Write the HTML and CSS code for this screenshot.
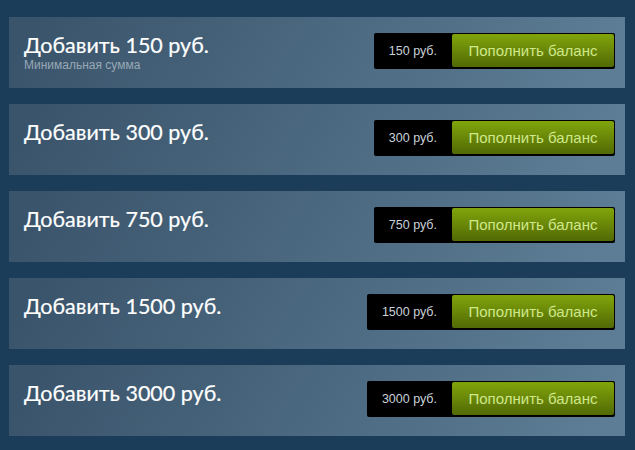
FILE: index.html
```html
<!DOCTYPE html>
<html lang="ru">
<head>
<meta charset="utf-8">
<title>Пополнение кошелька</title>
<link rel="stylesheet" href="styles.css">
</head>
<body>
<div class="funds">
  <div class="fund-row">
    <div class="fund-info">
      <h1 class="fund-title">Добавить 150 руб.</h1>
      <div class="fund-note">Минимальная сумма</div>
    </div>
    <div class="fund-action">
      <span class="fund-price">150 руб.</span>
      <a class="btn-green" href="#">Пополнить баланс</a>
    </div>
  </div>
  <div class="fund-row">
    <div class="fund-info">
      <h1 class="fund-title">Добавить 300 руб.</h1>
    </div>
    <div class="fund-action">
      <span class="fund-price">300 руб.</span>
      <a class="btn-green" href="#">Пополнить баланс</a>
    </div>
  </div>
  <div class="fund-row">
    <div class="fund-info">
      <h1 class="fund-title">Добавить 750 руб.</h1>
    </div>
    <div class="fund-action">
      <span class="fund-price">750 руб.</span>
      <a class="btn-green" href="#">Пополнить баланс</a>
    </div>
  </div>
  <div class="fund-row">
    <div class="fund-info">
      <h1 class="fund-title">Добавить 1500 руб.</h1>
    </div>
    <div class="fund-action">
      <span class="fund-price">1500 руб.</span>
      <a class="btn-green" href="#">Пополнить баланс</a>
    </div>
  </div>
  <div class="fund-row">
    <div class="fund-info">
      <h1 class="fund-title">Добавить 3000 руб.</h1>
    </div>
    <div class="fund-action">
      <span class="fund-price">3000 руб.</span>
      <a class="btn-green" href="#">Пополнить баланс</a>
    </div>
  </div>
</div>
</body>
</html>
```

FILE: styles.css
```css
html, body {
  margin: 0;
  padding: 0;
}

body {
  background: #1b3d5a;
  font-family: "Liberation Sans", Arial, sans-serif;
  width: 635px;
  height: 450px;
  overflow: hidden;
}

.funds {
  display: flex;
  flex-direction: column;
  gap: 16px;
  padding: 17px 10px 0 9px;
}

.fund-row {
  height: 71px;
  box-sizing: border-box;
  display: flex;
  justify-content: space-between;
  align-items: flex-start;
  padding: 15px 10px 0 15px;
  background: linear-gradient(-60deg, #5c7d95 5%, #3a546b 95%);
}

.fund-title {
  margin: 0;
  font-family: Lato, "Open Sans", sans-serif;
  font-weight: 400;
  font-size: 21.5px;
  line-height: 26px;
  color: #ffffff;
  -webkit-text-stroke: 0.2px #ffffff;
}

.fund-note {
  font-size: 12px;
  line-height: 14px;
  color: #98a8b5;
}

.fund-action {
  margin-top: 1px;
  display: flex;
  align-items: center;
  background: #000000;
  border-radius: 2px;
  padding: 1px 1px 2px 0;
  height: 36px;
  box-sizing: border-box;
}

.fund-price {
  padding: 0 15px 0 15px;
  font-size: 12.5px;
  color: #c9d2d9;
}

.btn-green {
  display: block;
  width: 162px;
  height: 33px;
  box-sizing: border-box;
  line-height: 33px;
  text-align: center;
  text-decoration: none;
  font-size: 15px;
  color: #cfe88a;
  border-radius: 2px;
  background: linear-gradient(to bottom, #7ea20b 5%, #546c05 95%);
}
```
